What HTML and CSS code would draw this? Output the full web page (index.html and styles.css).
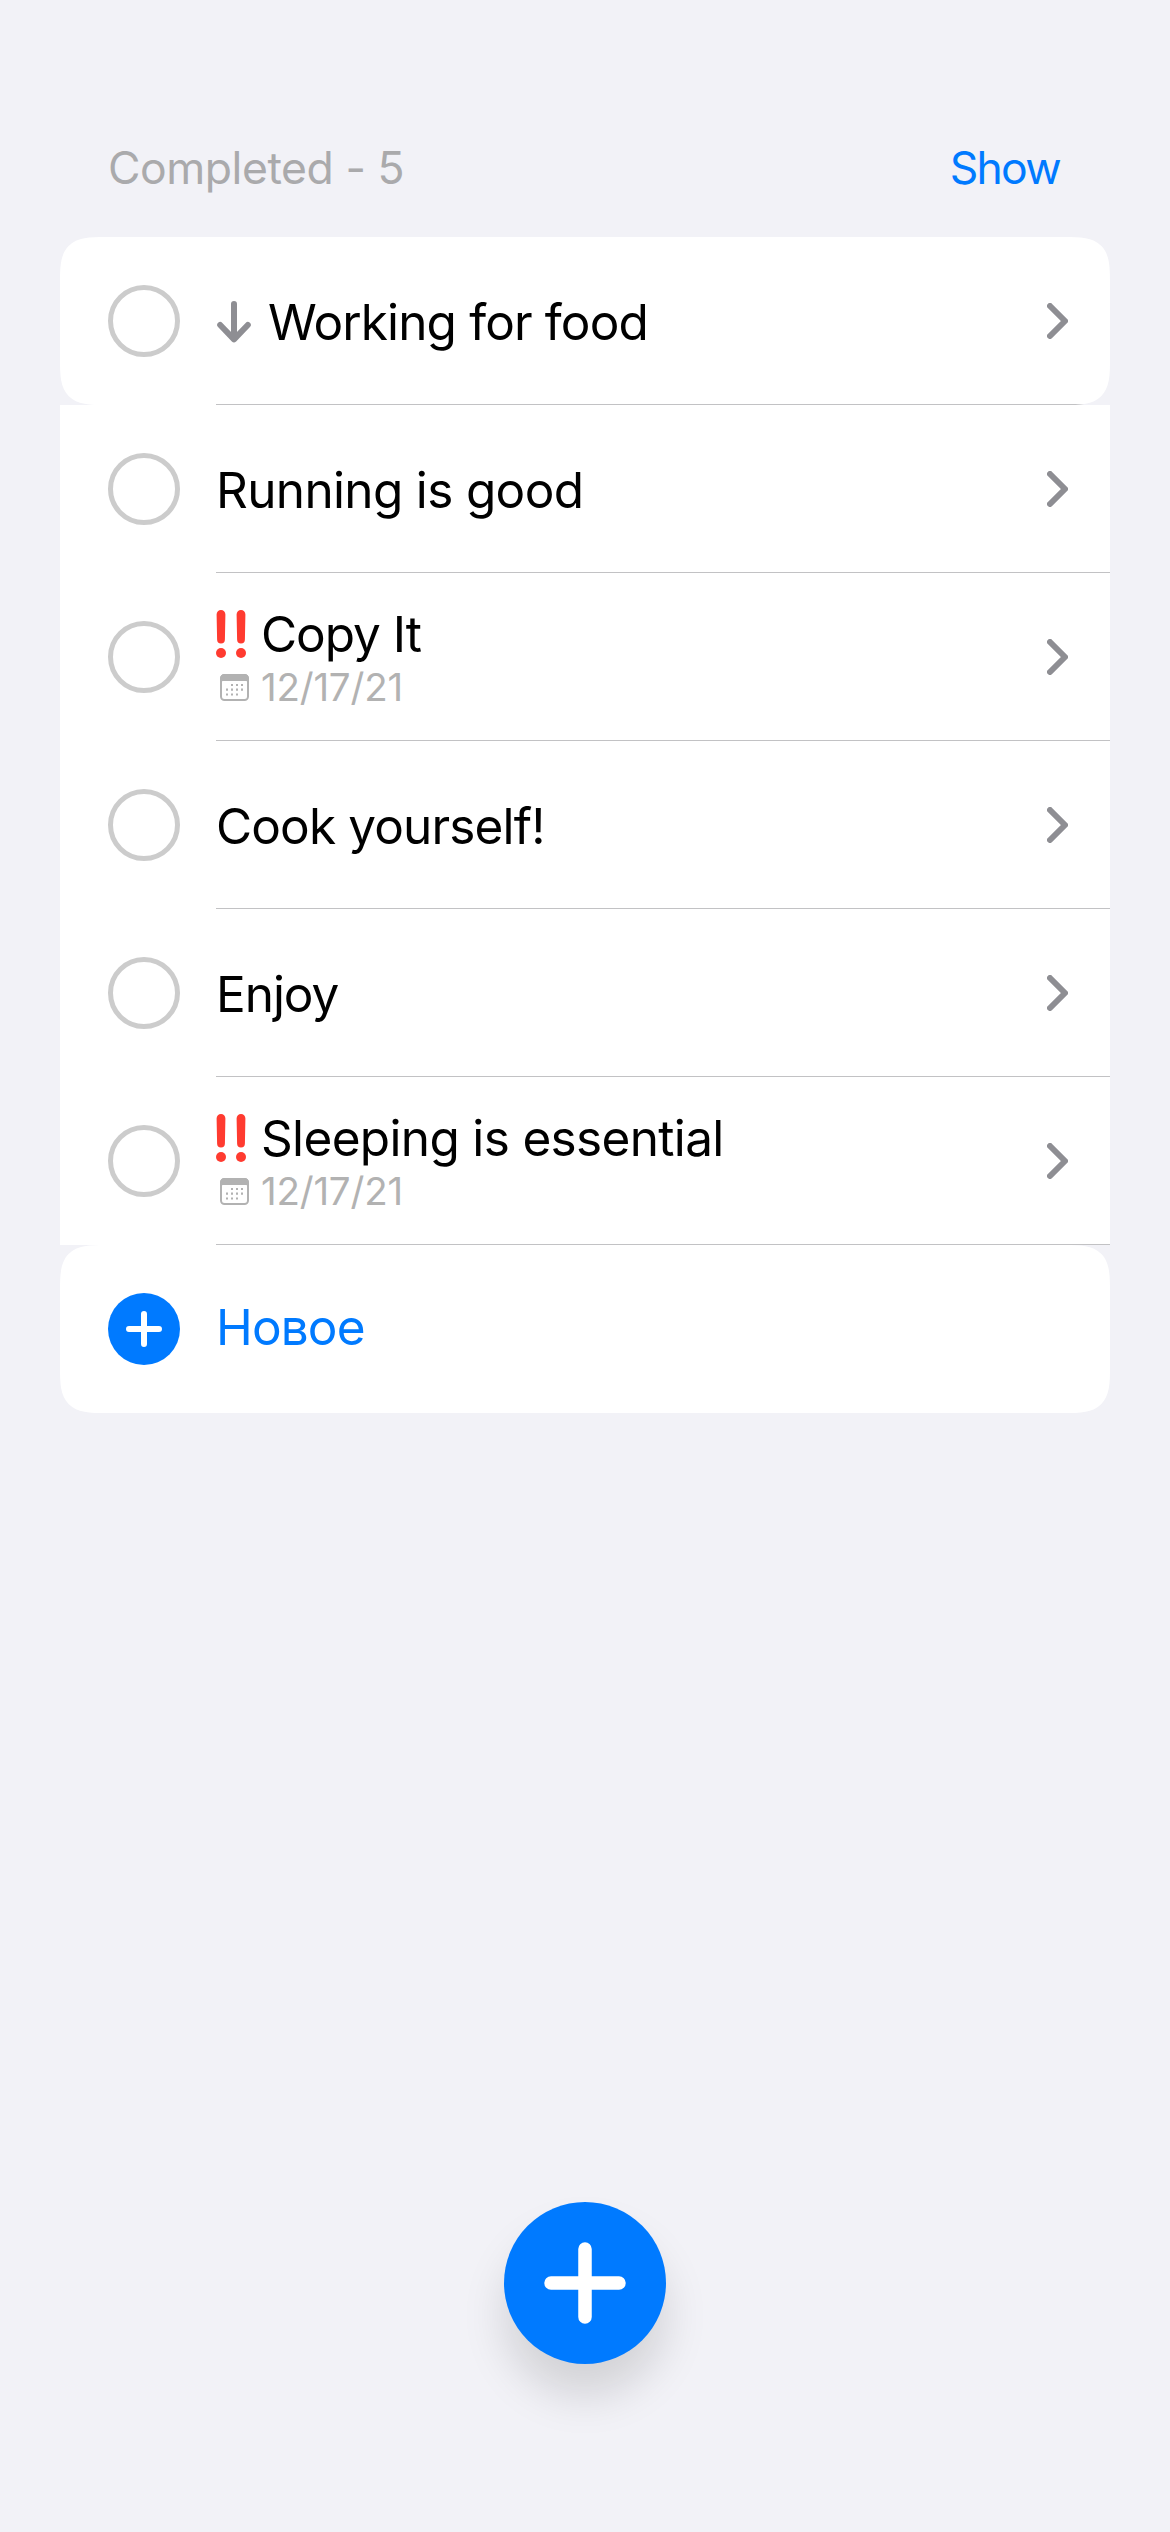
FILE: index.html
```html
<!DOCTYPE html>
<html lang="en">
<head>
<meta charset="utf-8">
<title>Tasks</title>
<link rel="stylesheet" href="styles.css">
</head>
<body>
<svg class="defs" width="0" height="0">
  <symbol id="chevron" viewBox="0 0 21 36"><path d="M3 3L18 18L3 33" fill="none" stroke="#8e8e93" stroke-width="6" stroke-linecap="round" stroke-linejoin="round"/></symbol>
  <symbol id="arrow-down" viewBox="0 0 34 42"><path d="M17 3V37M3.2 24L17 38.3L30.800 24" fill="none" stroke="#8e8e93" stroke-width="6" stroke-linecap="round" stroke-linejoin="round"/></symbol>
  <symbol id="urgent" viewBox="0 0 30 48">
    <g fill="#ff3b30">
      <path d="M.6 4.400A4.400 4.400 0 0 1 9.400 4.400L8.900 29.600A3.900 3.900 0 0 1 1.100 29.600Z"/>
      <circle cx="5" cy="43" r="5"/>
      <path d="M20.600 4.400A4.400 4.400 0 0 1 29.400 4.400L28.900 29.600A3.900 3.900 0 0 1 21.100 29.600Z"/>
      <circle cx="25" cy="43" r="5"/>
    </g>
  </symbol>
  <symbol id="calendar" viewBox="0 0 29 27">
    <rect x="1" y="1" width="27" height="25" rx="3.500" fill="none" stroke="#b2b2b2" stroke-width="2"/>
    <path d="M0 7.500V4.500A4.500 4.500 0 0 1 4.500 0H24.500A4.500 4.500 0 0 1 29 4.500V7.500H27.500Q27 7 26 7H3Q2 7 1.500 7.500Z" fill="#b2b2b2"/>
    <path d="M11 11h2M16 11h2M21 11h2M6 15.700h2M11 15.700h2M16 15.700h2M21 15.700h2M6 20.500h2M11 20.500h2M16 20.500h2" stroke="#b2b2b2" stroke-width="2.200"/>
  </symbol>
</svg>
<main class="screen">
  <header class="summary">
    <span class="summary-count">Completed - 5</span>
    <a class="summary-show">Show</a>
  </header>
  <ul class="list">
    <li class="row row-rounded">
      <span class="check"></span>
      <div class="body">
        <div class="text"><div class="title"><svg class="low" width="34" height="42"><use href="#arrow-down"/></svg><span>Working for food</span></div></div>
        <svg class="chevron" width="21" height="36"><use href="#chevron"/></svg>
      </div>
    </li>
    <li class="row">
      <span class="check"></span>
      <div class="body">
        <div class="text"><div class="title loose"><span>Running is good</span></div></div>
        <svg class="chevron" width="21" height="36"><use href="#chevron"/></svg>
      </div>
    </li>
    <li class="row">
      <span class="check"></span>
      <div class="body">
        <div class="text dated">
          <div class="title tight"><svg class="high" width="30" height="48"><use href="#urgent"/></svg><span>Copy It</span></div>
          <div class="date"><svg width="29" height="27"><use href="#calendar"/></svg><span>12/17/21</span></div>
        </div>
        <svg class="chevron" width="21" height="36"><use href="#chevron"/></svg>
      </div>
    </li>
    <li class="row">
      <span class="check"></span>
      <div class="body">
        <div class="text"><div class="title"><span>Cook yourself!</span></div></div>
        <svg class="chevron" width="21" height="36"><use href="#chevron"/></svg>
      </div>
    </li>
    <li class="row">
      <span class="check"></span>
      <div class="body">
        <div class="text"><div class="title tight"><span>Enjoy</span></div></div>
        <svg class="chevron" width="21" height="36"><use href="#chevron"/></svg>
      </div>
    </li>
    <li class="row">
      <span class="check"></span>
      <div class="body">
        <div class="text dated">
          <div class="title loose"><svg class="high" width="30" height="48"><use href="#urgent"/></svg><span>Sleeping is essential</span></div>
          <div class="date"><svg width="29" height="27"><use href="#calendar"/></svg><span>12/17/21</span></div>
        </div>
        <svg class="chevron" width="21" height="36"><use href="#chevron"/></svg>
      </div>
    </li>
    <li class="row row-rounded row-new">
      <span class="add"><svg width="36" height="36" viewBox="0 0 36 36"><path d="M18 3V33M3 18H33" stroke="#fff" stroke-width="6" stroke-linecap="round"/></svg></span>
      <span class="title new-title" lang="ru">Новое</span>
    </li>
  </ul>
  <button class="fab" aria-label="Add"><svg width="82" height="82" viewBox="0 0 82 82"><path d="M41 7V75M7 41H75" stroke="#fff" stroke-width="13.500" stroke-linecap="round"/></svg></button>
</main>
</body>
</html>
```
FILE: styles.css
```css
* { box-sizing: border-box; }

body {
  margin: 0;
  background: #f2f2f7;
  color: #000;
  font-family: Inter, "Liberation Sans", sans-serif;
}

svg { display: block; flex: none; }

.defs { position: absolute; }

.screen {
  display: flex;
  flex-direction: column;
  width: 1170px;
  height: 2532px;
  padding: 141px 60px 168px;
}

.summary {
  display: flex;
  justify-content: space-between;
  height: 96px;
  padding: 0 50px 0 48px;
  font-size: 44.5px;
  line-height: 54px;
}

.summary-count { color: #aaaaac; letter-spacing: -0.45px; }
.summary-show { color: #007aff; letter-spacing: -1.7px; }

.list {
  margin: 0;
  padding: 0;
  list-style: none;
}

.row {
  display: flex;
  align-items: center;
  gap: 36px;
  height: 168px;
  padding-left: 48px;
  background: #fff;
}

.row-rounded {
  overflow: hidden;
  border-radius: 31px;
}

@supports (corner-shape: superellipse(1.7)) {
  .row-rounded {
    border-radius: 46px;
    corner-shape: superellipse(1.7);
  }
}

.check {
  flex: none;
  width: 72px;
  height: 72px;
  border: 5px solid #ccc;
  border-radius: 50%;
}

.body {
  display: flex;
  flex: 1;
  align-items: center;
  justify-content: space-between;
  height: 168px;
  padding-right: 42px;
  box-shadow: inset 0 -1px #c2c2c4;
}

.text { padding-top: 2px; }
.text.dated { padding-top: 0; }

.title {
  display: flex;
  align-items: center;
  font-size: 49.5px;
  line-height: 60px;
  letter-spacing: -0.86px;
}

.title.loose { letter-spacing: -0.66px; }
.title.tight { letter-spacing: -1.05px; }

.low { margin: -1px 17px 0 1px; }
.high { margin-right: 15px; }

.date {
  display: flex;
  align-items: center;
  gap: 12px;
  padding-left: 4px;
  color: #b2b2b2;
  font-size: 38.5px;
  line-height: 46px;
  letter-spacing: -0.2px;
}

.add {
  display: flex;
  flex: none;
  align-items: center;
  justify-content: center;
  width: 72px;
  height: 72px;
  border-radius: 50%;
  background: #007aff;
}

.new-title {
  padding-bottom: 4px;
  color: #007aff;
}

.fab {
  display: flex;
  align-items: center;
  align-self: center;
  justify-content: center;
  width: 162px;
  height: 162px;
  margin-top: auto;
  padding: 0;
  border: 0;
  border-radius: 50%;
  background: #007aff;
  box-shadow: 0 32px 44px rgba(0, 0, 0, 0.13);
}
```
